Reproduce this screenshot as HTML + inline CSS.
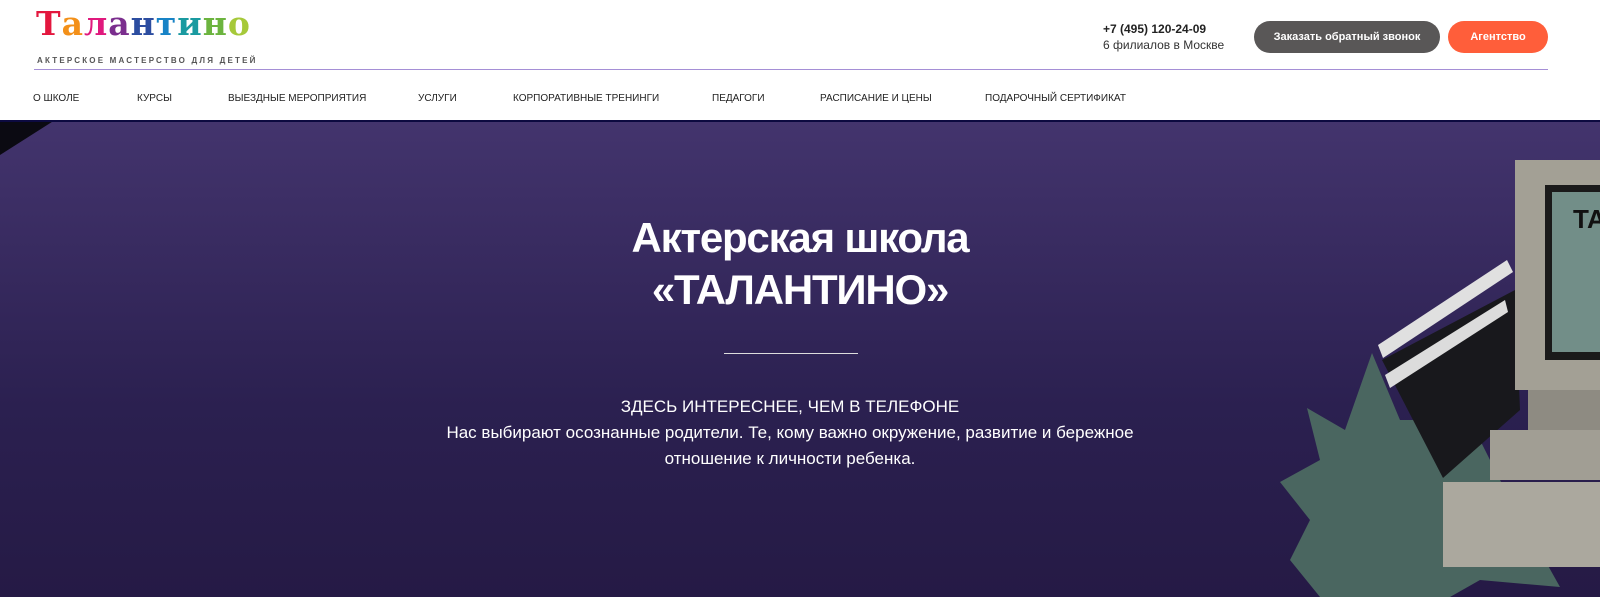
<!DOCTYPE html>
<html><head><meta charset="utf-8"><style>
*{margin:0;padding:0;box-sizing:border-box}
body{width:1600px;height:597px;overflow:hidden;font-family:"Liberation Sans",sans-serif;background:#fff;position:relative}
.logo{position:absolute;left:36px;top:4px;font-family:"DejaVu Serif","Liberation Serif",serif;font-weight:bold;font-size:33px;letter-spacing:1px}
.tag{position:absolute;left:37px;top:56px;font-size:8px;letter-spacing:2.2px;color:#555;font-weight:bold}
.hline{position:absolute;left:34px;top:69px;width:1514px;height:1px;background:#a58fd6}
.phone{position:absolute;left:1103px;top:22px;font-size:12px;font-weight:bold;color:#222}
.sub{position:absolute;left:1103px;top:38px;font-size:12px;color:#333}
.btn{position:absolute;top:21px;height:32px;border-radius:16px;color:#fff;font-size:11px;font-weight:bold;display:flex;align-items:center;justify-content:center}
.nav a{position:absolute;top:93px;font-size:10px;color:#222;text-decoration:none}
.hero{position:absolute;left:0;top:120px;width:1600px;height:477px;background:linear-gradient(#43346d,#2b2050 60%,#251a45);border-top:2px solid #0c0a40;overflow:hidden}
h1{position:absolute;left:0;width:1600px;top:90px;text-align:center;color:#fff;font-size:42px;line-height:52px;letter-spacing:-1.2px}
.dash{position:absolute;left:724px;top:231px;width:134px;height:1px;background:#ddd}
.p{position:absolute;left:0;width:1580px;text-align:center;color:#fff;font-size:17px;line-height:26px;top:272px}
</style></head><body>
<div class="logo"><span style="color:#e3173e">Т</span><span style="color:#f39019">а</span><span style="color:#e0197d">л</span><span style="color:#7b2e8e">а</span><span style="color:#2c4da0">н</span><span style="color:#1883c6">т</span><span style="color:#1a9aa0">и</span><span style="color:#6cb43f">н</span><span style="color:#a6c93a">о</span></div>
<div class="tag">АКТЕРСКОЕ МАСТЕРСТВО ДЛЯ ДЕТЕЙ</div>
<div class="hline"></div>
<div class="phone">+7 (495) 120-24-09</div>
<div class="sub">6 филиалов в Москве</div>
<div class="btn" style="left:1254px;width:186px;background:#595757">Заказать обратный звонок</div>
<div class="btn" style="left:1448px;width:100px;background:#ff5e3a">Агентство</div>
<div class="nav">
<a style="left:33px">О ШКОЛЕ</a><a style="left:137px">КУРСЫ</a><a style="left:228px">ВЫЕЗДНЫЕ МЕРОПРИЯТИЯ</a><a style="left:418px">УСЛУГИ</a><a style="left:513px">КОРПОРАТИВНЫЕ ТРЕНИНГИ</a><a style="left:712px">ПЕДАГОГИ</a><a style="left:820px">РАСПИСАНИЕ И ЦЕНЫ</a><a style="left:985px">ПОДАРОЧНЫЙ СЕРТИФИКАТ</a>
</div>
<div class="hero">
<svg width="1600" height="477" style="position:absolute;left:0;top:-2px">
<polygon points="0,0 55,0 0,35" fill="#0b0a12"/>
<polygon points="1307,288 1345,310 1372,233 1400,300 1470,300 1500,360 1560,467 1480,460 1450,477 1320,477 1290,440 1310,400 1280,362 1320,340" fill="#4a6660"/>
<polygon points="1378,225 1507,140 1513,152 1383,238" fill="#e0e0e0"/>
<polygon points="1382,240 1515,170 1520,290 1443,358" fill="#18181c"/>
<polygon points="1385,255 1505,180 1508,192 1390,268" fill="#dcdcdc"/>
<rect x="1515" y="40" width="90" height="230" fill="#a3a095"/>
<rect x="1545" y="65" width="60" height="175" fill="#1a1a1a"/>
<rect x="1552" y="72" width="55" height="160" fill="#728e88"/>
<text x="1573" y="108" fill="#111" font-size="26" font-weight="bold" font-family="Liberation Sans">TA</text>
<rect x="1528" y="270" width="75" height="40" fill="#8e8b82"/>
<rect x="1490" y="310" width="115" height="50" fill="#a19e94"/>
<rect x="1443" y="362" width="160" height="85" fill="#aba89e"/>
</svg>
<h1>Актерская школа<br>«ТАЛАНТИНО»</h1>
<div class="dash"></div>
<div class="p">ЗДЕСЬ ИНТЕРЕСНЕЕ, ЧЕМ В ТЕЛЕФОНЕ<br>Нас выбирают осознанные родители. Те, кому важно окружение, развитие и бережное<br>отношение к личности ребенка.</div>
</div>
</body></html>
